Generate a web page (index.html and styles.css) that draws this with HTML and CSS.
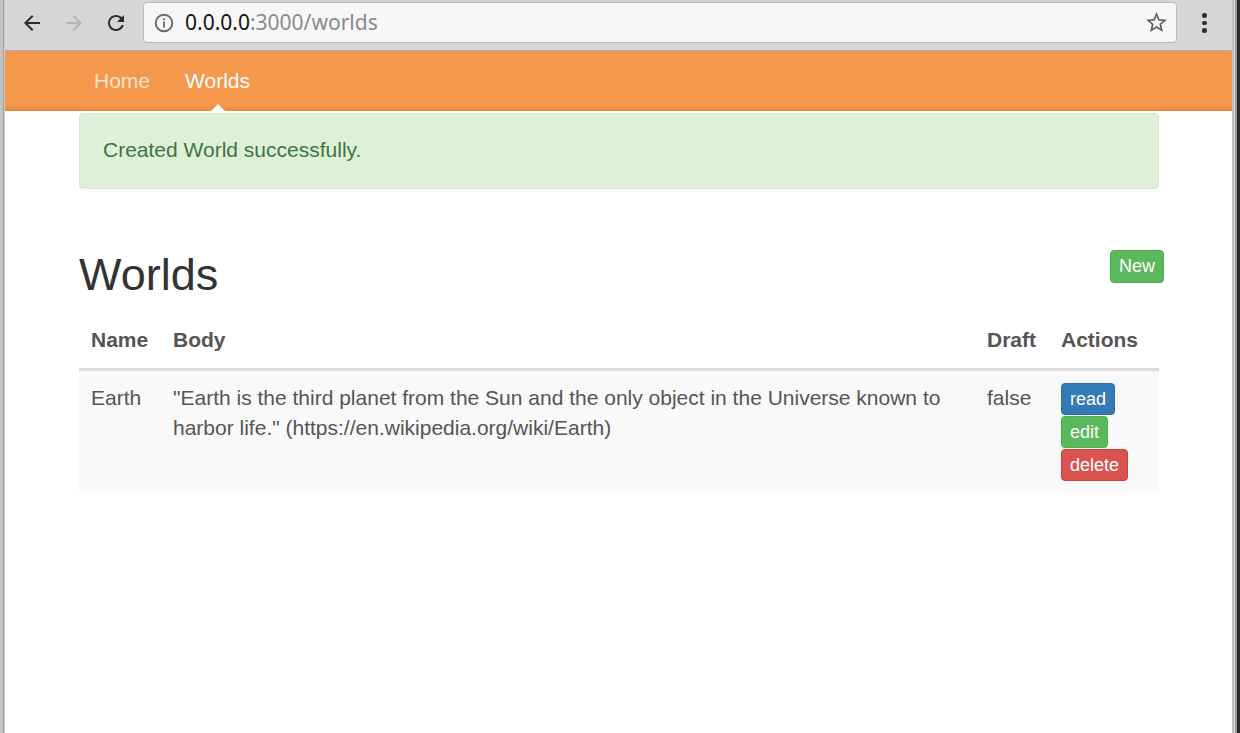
FILE: index.html
```html
<!DOCTYPE html>
<html lang="en">
<head>
<meta charset="utf-8">
<title>Worlds</title>
<link rel="stylesheet" href="styles.css">
</head>
<body>
<div class="frame-left"></div>
<div class="window">
  <div class="toolbar">
    <button class="tb-btn" aria-label="Back">
      <svg width="24" height="24" viewBox="0 0 24 24"><path fill="#2b2b2b" d="M20 11H7.83l5.59-5.59L12 4l-8 8 8 8 1.41-1.41L7.83 13H20v-2z"/></svg>
    </button>
    <button class="tb-btn" aria-label="Forward">
      <svg width="24" height="24" viewBox="0 0 24 24"><path fill="#b3b3b3" d="M12 4l-1.41 1.41L16.170 11H4v2h12.17l-5.58 5.590L12 20l8-8z"/></svg>
    </button>
    <button class="tb-btn" aria-label="Reload">
      <svg width="24" height="24" viewBox="0 0 24 24"><path fill="#2b2b2b" d="M17.65 6.35C16.2 4.9 14.21 4 12 4c-4.42 0-7.99 3.58-7.99 8s3.57 8 7.99 8c3.73 0 6.84-2.55 7.73-6h-2.08c-.82 2.33-3.04 4-5.65 4-3.31 0-6-2.690-6-6s2.690-6 6-6c1.66 0 3.14.69 4.22 1.78L13 11h7V4l-2.35 2.35z"/></svg>
    </button>
    <div class="omnibox">
      <svg class="info" width="20" height="20" viewBox="0 0 20 20">
        <circle cx="10" cy="10" r="8.3" fill="none" stroke="#676767" stroke-width="1.9"/>
        <rect x="9.1" y="5.4" width="1.8" height="1.9" fill="#676767"/>
        <rect x="9.1" y="8.6" width="1.8" height="6" fill="#676767"/>
      </svg>
      <span class="url"><span class="host">0.0.0.0</span><span class="path">:3000/worlds</span></span>
      <svg class="star" width="25" height="25" viewBox="0 0 24 24"><path fill="#5e5e5e" d="M22 9.24l-7.19-.62L12 2 9.19 8.63 2 9.24l5.46 4.73L5.82 21 12 17.27 18.18 21l-1.630-7.03L22 9.24zM12 15.4l-3.76 2.27 1-4.28-3.32-2.88 4.38-.38L12 6.1l1.71 4.04 4.38.38-3.32 2.88 1 4.28L12 15.4z"/></svg>
    </div>
    <button class="tb-menu" aria-label="Menu">
      <span class="dot"></span><span class="dot"></span><span class="dot"></span>
    </button>
  </div>

  <nav class="navbar">
    <a class="nav-link" href="#">Home</a>
    <a class="nav-link active" href="#">Worlds</a>
  </nav>

  <main class="container">
    <div class="alert">Created World successfully.</div>

    <div class="page-head">
      <h1 class="title">Worlds</h1>
      <a class="btn btn-success" href="#">New</a>
    </div>

    <table class="table">
      <colgroup>
        <col class="c-name">
        <col class="c-body">
        <col class="c-draft">
        <col class="c-actions">
      </colgroup>
      <thead>
        <tr>
          <th>Name</th>
          <th>Body</th>
          <th>Draft</th>
          <th>Actions</th>
        </tr>
      </thead>
      <tbody>
        <tr>
          <td>Earth</td>
          <td>"Earth is the third planet from the Sun and the only object in the Universe known to harbor life." (https://en.wikipedia.org/wiki/Earth)</td>
          <td>false</td>
          <td>
            <div class="actions">
              <a class="btn btn-primary" href="#">read</a>
              <a class="btn btn-success" href="#">edit</a>
              <a class="btn btn-danger" href="#">delete</a>
            </div>
          </td>
        </tr>
      </tbody>
    </table>
  </main>
</div>
<div class="frame-right"></div>
</body>
</html>
```

FILE: styles.css
```css
* { box-sizing: border-box; }

html, body {
  margin: 0;
  height: 100%;
}

body {
  display: flex;
  background: #ffffff;
  font-family: "Liberation Sans", Arial, sans-serif;
  color: #333;
  overflow: hidden;
}

.frame-left {
  width: 5px;
  flex: none;
  background: linear-gradient(to right, #c4c4c4 0, #c4c4c4 3px, #9e9e9e 3px, #9e9e9e 4px, #cfcfcf 4px);
}

.frame-right {
  width: 8px;
  flex: none;
  background: linear-gradient(to right, #c2c2c2 0, #c2c2c2 2px, #dadada 2px, #dadada 3px, #9a9a9a 3px, #9a9a9a 5px, #2c2c2c 5px);
}

.window {
  flex: 1;
  display: flex;
  flex-direction: column;
  min-width: 0;
}

/* Browser toolbar */
.toolbar {
  height: 51px;
  flex: none;
  display: flex;
  align-items: flex-start;
  padding-left: 6px;
  background: #d6d6d6;
  border-bottom: 1px solid #a9afb6;
}

.tb-btn {
  width: 42px;
  height: 46px;
  border: 0;
  padding: 0;
  background: transparent;
  display: flex;
  align-items: center;
  justify-content: center;
}

.omnibox {
  flex: 1;
  height: 41px;
  margin-top: 2px;
  margin-left: 6px;
  display: flex;
  align-items: center;
  padding: 0 7px 0 10px;
  background: #f7f7f7;
  border: 1px solid #b8b8b8;
  border-radius: 4px;
}

.info { flex: none; }

.url {
  flex: 1;
  margin-left: 11px;
  font-family: "Noto Sans", "Open Sans", sans-serif;
  font-size: 21px;
  line-height: 28px;
  padding-bottom: 1px;
  white-space: nowrap;
}

.host { color: #111; }
.path { color: #8a8a8a; }

.star { flex: none; }

.tb-menu {
  width: 55px;
  height: 46px;
  border: 0;
  padding: 0;
  background: transparent;
  display: flex;
  flex-direction: column;
  align-items: center;
  justify-content: center;
  gap: 3px;
}

.dot {
  width: 4.5px;
  height: 4.5px;
  border-radius: 50%;
  background: #2e2e2e;
}

/* Navbar */
.navbar {
  height: 60px;
  flex: none;
  display: flex;
  gap: 5px;
  padding-left: 74px;
  background: linear-gradient(to bottom, #f4994b 0, #f4994b 54px, #ef9346 56px, #e78a3e 60px);
}

.nav-link {
  position: relative;
  display: block;
  padding: 0 15px;
  font-size: 21px;
  line-height: 60px;
  color: rgba(255, 255, 255, 0.72);
  text-decoration: none;
}

.nav-link.active { color: #ffffff; }

.nav-link.active::after {
  content: "";
  position: absolute;
  left: 50%;
  bottom: 0;
  margin-left: -7px;
  border-left: 7px solid transparent;
  border-right: 7px solid transparent;
  border-bottom: 7px solid #ffffff;
}

/* Content */
.container {
  padding: 2px 73px 0 74px;
}

.alert {
  padding: 22px 23px 24px;
  font-size: 21px;
  line-height: 28px;
  color: #3c763d;
  background: #dff0d8;
  border: 1px solid #d6e9c6;
  border-radius: 4px;
}

.page-head {
  margin-top: 61px;
  display: flex;
  justify-content: space-between;
  align-items: flex-start;
}

.title {
  margin: 0;
  font-size: 45px;
  font-weight: 400;
  line-height: 50px;
  color: #333;
}

.btn {
  display: inline-block;
  padding: 2px 8px;
  font-size: 18px;
  line-height: 26px;
  color: #fff;
  text-decoration: none;
  border: 1px solid transparent;
  border-radius: 4px;
  white-space: nowrap;
}

.page-head .btn {
  margin-right: -5px;
  line-height: 27px;
}

.btn-primary { background: #337ab7; border-color: #2e6da4; }
.btn-success { background: #5cb85c; border-color: #4cae4c; }
.btn-danger  { background: #d9534f; border-color: #d43f3a; }

.table {
  width: 100%;
  margin-top: 12px;
  border-collapse: collapse;
  table-layout: fixed;
  font-size: 21px;
  color: #555;
}

.c-name { width: 82px; }
.c-draft { width: 74px; }
.c-actions { width: 110px; }

.table th {
  text-align: left;
  font-weight: 700;
  padding: 14px 12px;
  line-height: 28px;
  border-bottom: 3px solid #dddddd;
}

.table td {
  vertical-align: top;
  padding: 12px 12px;
  line-height: 30px;
  background: #f9f9f9;
}

.actions {
  display: flex;
  flex-direction: column;
  align-items: flex-start;
  gap: 1px;
}
```
